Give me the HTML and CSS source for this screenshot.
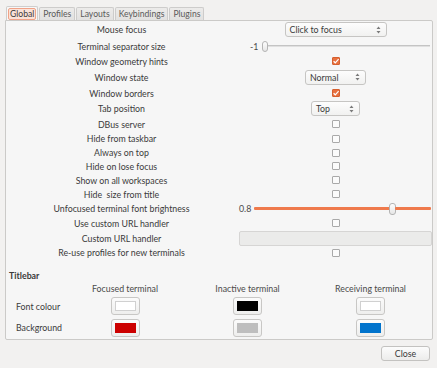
FILE: index.html
```html
<!DOCTYPE html>
<html>
<head>
<meta charset="utf-8">
<link rel="stylesheet" href="styles.css">
</head>
<body>
<div class="window">
  <div class="tabs">
    <div class="tab active"><span class="tab-focus">Global</span></div>
    <div class="tab">Profiles</div>
    <div class="tab">Layouts</div>
    <div class="tab">Keybindings</div>
    <div class="tab">Plugins</div>
  </div>
  <div class="panel">
    <div class="settings">
      <div class="lbl">Mouse focus</div>
      <div class="ctl"><div class="combo combo-focus"><span>Click to focus</span><svg class="arrows" width="5" height="8" viewBox="0 0 5 8"><path d="M2.5 0.5 L4.5 3 L0.5 3 Z M0.5 5 L4.5 5 L2.5 7.5 Z" fill="#7a7a7a"/></svg></div></div>

      <div class="lbl">Terminal separator size</div>
      <div class="ctl ctl-left"><div class="scale scale-sep"><span class="val">-1</span><span class="knob"></span><span class="track"></span></div></div>

      <div class="lbl">Window geometry hints</div>
      <div class="ctl"><span class="check on"><svg width="8" height="8" viewBox="0 0 8 8"><path d="M1.6 4.2 L3.3 5.8 L6.6 2.2" fill="none" stroke="#fff" stroke-width="1.2"/></svg></span></div>

      <div class="lbl">Window state</div>
      <div class="ctl"><div class="combo combo-state"><span>Normal</span><svg class="arrows" width="5" height="8" viewBox="0 0 5 8"><path d="M2.5 0.5 L4.5 3 L0.5 3 Z M0.5 5 L4.5 5 L2.5 7.5 Z" fill="#7a7a7a"/></svg></div></div>

      <div class="lbl">Window borders</div>
      <div class="ctl"><span class="check on"><svg width="8" height="8" viewBox="0 0 8 8"><path d="M1.6 4.2 L3.3 5.8 L6.6 2.2" fill="none" stroke="#fff" stroke-width="1.2"/></svg></span></div>

      <div class="lbl">Tab position</div>
      <div class="ctl"><div class="combo combo-tab"><span>Top</span><svg class="arrows" width="5" height="8" viewBox="0 0 5 8"><path d="M2.5 0.5 L4.5 3 L0.5 3 Z M0.5 5 L4.5 5 L2.5 7.5 Z" fill="#7a7a7a"/></svg></div></div>

      <div class="lbl">DBus server</div>
      <div class="ctl"><span class="check"></span></div>

      <div class="lbl">Hide from taskbar</div>
      <div class="ctl"><span class="check"></span></div>

      <div class="lbl">Always on top</div>
      <div class="ctl"><span class="check"></span></div>

      <div class="lbl">Hide on lose focus</div>
      <div class="ctl"><span class="check"></span></div>

      <div class="lbl">Show on all workspaces</div>
      <div class="ctl"><span class="check"></span></div>

      <div class="lbl">Hide&nbsp; size from title</div>
      <div class="ctl"><span class="check"></span></div>

      <div class="lbl">Unfocused terminal font brightness</div>
      <div class="ctl ctl-left"><div class="scale scale-bright"><span class="val">0.8</span><span class="fill"></span><span class="knob knob-v"></span><span class="fill fill-rest"></span></div></div>

      <div class="lbl">Use custom URL handler</div>
      <div class="ctl"><span class="check"></span></div>

      <div class="lbl">Custom URL handler</div>
      <div class="ctl ctl-left"><div class="entry"></div></div>

      <div class="lbl">Re-use profiles for new terminals</div>
      <div class="ctl"><span class="check"></span></div>
    </div>

    <div class="section-head">Titlebar</div>
    <div class="colors">
      <div></div>
      <div class="col-head">Focused terminal</div>
      <div class="col-head">Inactive terminal</div>
      <div class="col-head">Receiving terminal</div>

      <div class="row-lbl">Font colour</div>
      <div class="cell"><div class="cbtn"><span class="sw sw-white"></span></div></div>
      <div class="cell"><div class="cbtn"><span class="sw sw-black"></span></div></div>
      <div class="cell"><div class="cbtn"><span class="sw sw-white"></span></div></div>

      <div class="row-lbl">Background</div>
      <div class="cell"><div class="cbtn"><span class="sw sw-red"></span></div></div>
      <div class="cell"><div class="cbtn"><span class="sw sw-grey"></span></div></div>
      <div class="cell"><div class="cbtn"><span class="sw sw-blue"></span></div></div>
    </div>
  </div>
  <div class="footer">
    <button class="close">Close</button>
  </div>
</div>
</body>
</html>
```

FILE: styles.css
```css
html, body {
  margin: 0;
  padding: 0;
  background: #f2f1f0;
}

body {
  font-family: Lato, "Open Sans", sans-serif;
  font-size: 8.8px;
  color: #3a3a3a;
  width: 437px;
  height: 368px;
  overflow: hidden;
}

.window {
  padding: 6px 4px 0 5px;
}

.tabs {
  display: flex;
  align-items: flex-end;
  height: 14px;
  padding-left: 1px;
  gap: 1px;
  font-size: 8.6px;
}

.tab {
  height: 13px;
  line-height: 13px;
  padding: 0 3px;
  background: linear-gradient(#ecebea, #e2e1e0);
  border: 1px solid #cdcccb;
  border-bottom: none;
  border-radius: 2px 2px 0 0;
  color: #5a5a5a;
  box-sizing: border-box;
}

.tab.active {
  height: 14px;
  padding: 1px 1px 0 1px;
  background: #f7f7f7;
  border-color: #cfcecd;
}

.tab-focus {
  display: block;
  height: 12px;
  line-height: 11px;
  padding: 0 1px;
  background: #fbe2d8;
  border: 1px solid #f0a287;
  border-radius: 2px;
  box-sizing: border-box;
  color: #3a3a3a;
}

.panel {
  background: #f6f6f6;
  border: 1px solid #cbcac8;
  border-radius: 0 2px 2px 2px;
  height: 320px;
  box-sizing: border-box;
}

.settings {
  display: grid;
  grid-template-columns: 231px 193px;
  column-gap: 2px;
  grid-template-rows: 17px 16px 14px 18px 14px 17px 14px 15px 13px 14px 14px 14px 15px 14px 16px 13px;
}

.lbl {
  display: flex;
  align-items: center;
  justify-content: center;
  white-space: nowrap;
}

.ctl {
  display: flex;
  align-items: center;
  justify-content: center;
}

.ctl-left {
  justify-content: flex-start;
}

.combo {
  display: flex;
  align-items: center;
  justify-content: space-between;
  height: 15px;
  box-sizing: border-box;
  padding: 0 5px 0 4px;
  background: linear-gradient(#fdfdfd, #f1f1f0);
  border: 1px solid #c6c5c3;
  border-radius: 3px;
  color: #3a3a3a;
}

.combo-focus { width: 102px; }
.combo-state { width: 61px; }
.combo-tab { width: 49px; }

.check {
  display: block;
  width: 8px;
  height: 8px;
  box-sizing: border-box;
  border: 1px solid #a9a9a9;
  border-radius: 1px;
  background: #fbfbfb;
}

.check svg {
  display: block;
  margin: -1px;
}

.check.on {
  background: #e8703f;
  border-color: #d5602f;
}

.scale {
  display: flex;
  align-items: center;
  height: 12px;
}

.scale .val {
  color: #4a4a4a;
}

.scale-sep {
  padding-left: 11px;
  width: 180px;
}

.scale-sep .val {
  margin-right: 4px;
}

.scale-sep .track {
  flex: 1;
  height: 1px;
  background: #c4c4c4;
  border-bottom: 1px solid #e0e0e0;
}

.knob {
  width: 6px;
  height: 11px;
  box-sizing: border-box;
  border: 1px solid #b4b4b4;
  border-radius: 3px;
  background: linear-gradient(#fdfdfd, #e6e6e6);
  flex: none;
}

.scale-bright {
  width: 192px;
}

.scale-bright .val {
  margin-right: 3px;
}

.scale-bright .fill {
  height: 3px;
  background: #ef7a4c;
  border-radius: 1px;
  width: 136px;
}

.scale-bright .fill-rest {
  width: auto;
  flex: 1;
}

.knob-v {
  height: 12px;
  width: 7px;
  margin: 0 -1px;
}

.entry {
  width: 193px;
  height: 15px;
  box-sizing: border-box;
  background: #ebebea;
  border: 1px solid #d6d5d4;
  border-radius: 2px;
}

.section-head {
  font-weight: bold;
  margin-top: 11px;
  padding-left: 3px;
  height: 12px;
  line-height: 12px;
}

.colors {
  display: grid;
  grid-template-columns: 58px 122px 123px 123px;
  grid-template-rows: 13px 22px 21px;
}

.col-head {
  display: flex;
  align-items: center;
  justify-content: center;
  white-space: nowrap;
  color: #4a4a4a;
}

.row-lbl {
  display: flex;
  align-items: center;
  padding-left: 10px;
  white-space: nowrap;
}

.cell {
  display: flex;
  align-items: center;
  justify-content: center;
}

.cbtn {
  width: 29px;
  height: 18px;
  box-sizing: border-box;
  border: 1px solid #c8c7c5;
  border-radius: 3px;
  background: linear-gradient(#fbfbfb, #eeeeed);
  display: flex;
  align-items: center;
  justify-content: center;
}

.sw {
  display: block;
  width: 21px;
  height: 10px;
  box-sizing: border-box;
}

.sw-white { background: #ffffff; border: 1px solid #d0d0d0; }
.sw-black { background: #000000; }
.sw-red { background: #cc0000; }
.sw-grey { background: #bebebe; }
.sw-blue { background: #0073cc; }

.footer {
  display: flex;
  justify-content: flex-end;
  padding-top: 6px;
  padding-right: 3px;
}

.close {
  width: 49px;
  height: 15px;
  padding: 0;
  margin: 0;
  font-family: Lato, "Open Sans", sans-serif;
  font-size: 8.8px;
  color: #3a3a3a;
  background: linear-gradient(#fcfcfc, #ececeb);
  border: 1px solid #c3c2c0;
  border-radius: 3px;
}
```
